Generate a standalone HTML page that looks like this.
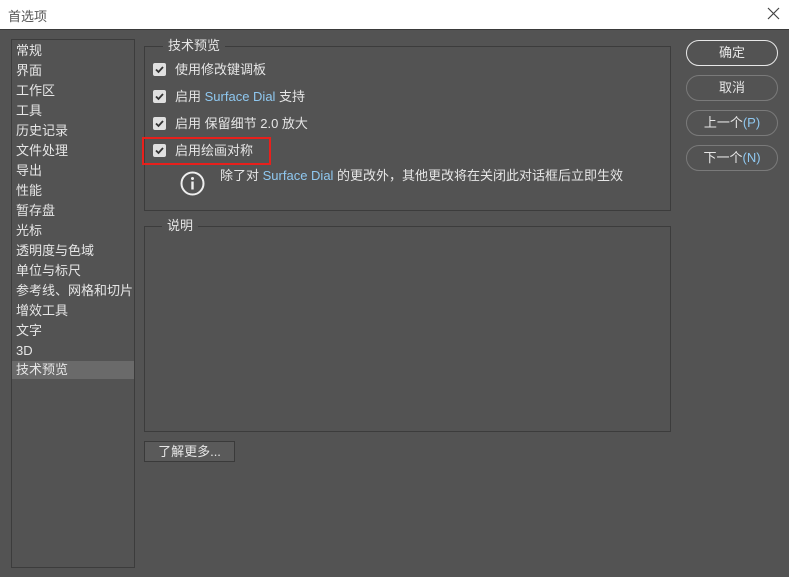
<!DOCTYPE html><html><head><meta charset="utf-8"><style>
body{margin:0;width:789px;height:577px;background:#535353;position:relative;overflow:hidden;font-family:"Liberation Sans","Noto Sans CJK SC",sans-serif;font-size:13px;color:#e6e6e6}
.a{position:absolute}
.title{left:0;top:0;width:789px;height:29px;background:#fff;border-bottom:1px solid #3a3a3a}
.list{left:11px;top:39px;width:122px;height:527px;border:1px solid #3c3c3c}
.li{position:absolute;left:4px;height:18px;line-height:18px;white-space:nowrap}
.grp{border:1px solid #3c3c3c}
.lg{background:#535353;padding:0 5px;line-height:16px}
.cb{width:13px;height:13px;background:#e0e0e0;border-radius:2px}
.cb svg{position:absolute;left:1px;top:1px}
.lbl{line-height:16px;white-space:nowrap}
.btn{left:686px;width:90px;height:24px;border:1px solid #7a7a7a;border-radius:13px;text-align:center;line-height:24px}
.bl{color:#8fc8f0}
</style></head><body>
<div class="a title"><span class="a" style="left:8px;top:6px;color:#555;font-size:13px">首选项</span>
<svg class="a" style="left:767px;top:7px" width="13" height="13"><path d="M1 1L12 12M12 1L1 12" stroke="#444" stroke-width="1.2"/></svg></div>
<div class="a list">
<div class="li" style="top:2px">常规</div><div class="li" style="top:22px">界面</div><div class="li" style="top:42px">工作区</div><div class="li" style="top:62px">工具</div><div class="li" style="top:82px">历史记录</div><div class="li" style="top:102px">文件处理</div><div class="li" style="top:122px">导出</div><div class="li" style="top:142px">性能</div><div class="li" style="top:162px">暂存盘</div><div class="li" style="top:182px">光标</div><div class="li" style="top:202px">透明度与色域</div><div class="li" style="top:222px">单位与标尺</div><div class="li" style="top:242px">参考线、网格和切片</div><div class="li" style="top:262px">增效工具</div><div class="li" style="top:282px">文字</div><div class="li" style="top:302px">3D</div>
<div class="li" style="top:321px;left:0;width:122px;background:#6a6a6a;padding-left:4px;box-sizing:border-box">技术预览</div>
</div>
<div class="a grp" style="left:144px;top:46px;width:525px;height:163px"></div>
<span class="a lg" style="left:163px;top:38px">技术预览</span>
<div class="a cb" style="left:153px;top:63px"><svg width="11" height="11"><path d="M2 5.5L4.5 8L9 3" stroke="#333" stroke-width="1.8" fill="none"/></svg></div>
<span class="a lbl" style="left:175px;top:62px">使用修改键调板</span>
<div class="a cb" style="left:153px;top:90px"><svg width="11" height="11"><path d="M2 5.5L4.5 8L9 3" stroke="#333" stroke-width="1.8" fill="none"/></svg></div>
<span class="a lbl" style="left:175px;top:89px">启用 <span class="bl">Surface Dial</span> 支持</span>
<div class="a cb" style="left:153px;top:117px"><svg width="11" height="11"><path d="M2 5.5L4.5 8L9 3" stroke="#333" stroke-width="1.8" fill="none"/></svg></div>
<span class="a lbl" style="left:175px;top:116px">启用 保留细节 2.0 放大</span>
<div class="a cb" style="left:153px;top:144px"><svg width="11" height="11"><path d="M2 5.5L4.5 8L9 3" stroke="#333" stroke-width="1.8" fill="none"/></svg></div>
<span class="a lbl" style="left:175px;top:143px">启用绘画对称</span>
<div class="a" style="left:142px;top:137px;width:125px;height:24px;border:2px solid #e8201c"></div>
<svg class="a" style="left:180px;top:171px" width="25" height="25"><circle cx="12.5" cy="12.5" r="11" stroke="#eee" stroke-width="2" fill="none"/><circle cx="12.5" cy="7.5" r="1.5" fill="#eee"/><rect x="11.3" y="10.5" width="2.4" height="8" fill="#eee"/></svg>
<span class="a lbl" style="left:220px;top:168px">除了对 <span class="bl">Surface Dial</span> 的更改外，其他更改将在关闭此对话框后立即生效</span>
<div class="a grp" style="left:144px;top:226px;width:525px;height:204px"></div>
<span class="a lg" style="left:162px;top:218px">说明</span>
<div class="a" style="left:144px;top:441px;width:89px;height:19px;border:1px solid #3a3a3a;background:#5a5a5a;text-align:center;line-height:19px">了解更多...</div>
<div class="a btn" style="top:40px;border-color:#e8e8e8">确定</div>
<div class="a btn" style="top:75px">取消</div>
<div class="a btn" style="top:110px">上一个<span class="bl">(P)</span></div>
<div class="a btn" style="top:145px">下一个<span class="bl">(N)</span></div>
</body></html>
